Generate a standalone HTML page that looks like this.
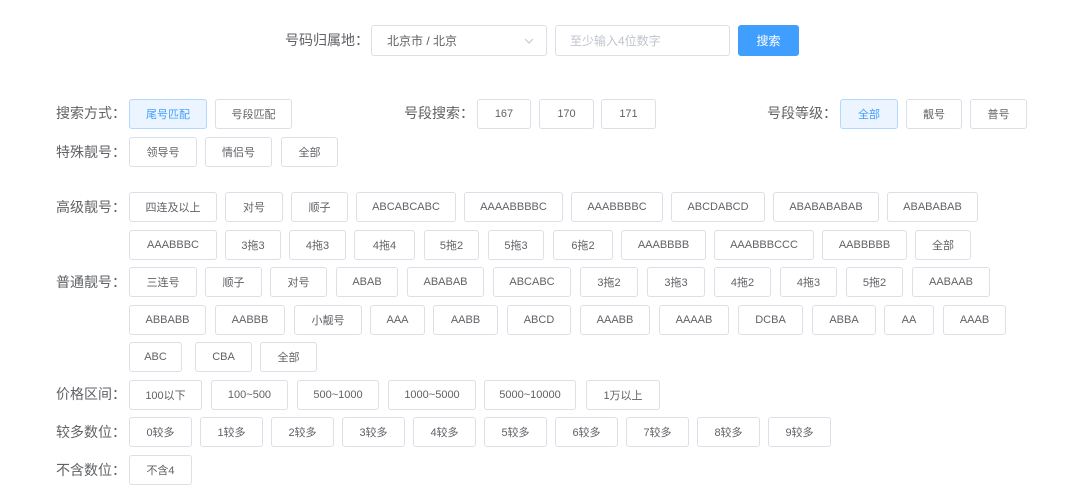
<!DOCTYPE html>
<html><head><meta charset="utf-8"><style>
body{margin:0;width:1080px;height:503px;background:#fff;position:relative;overflow:hidden;font-family:"Liberation Sans","Noto Sans CJK SC",sans-serif}
.b{position:absolute;height:28px;border:1px solid #dcdfe6;border-radius:3px;box-sizing:content-box;font-size:11px;color:#606266;display:flex;align-items:center;justify-content:center;background:#fff}
.s{background:#ecf5ff;border-color:#b3d8ff;color:#409eff}
.l{position:absolute;font-size:14px;color:#606266;line-height:16px}
</style></head><body>
<div class="l" style="left:285px;top:32px;">号码归属地：</div>
<div class="b" style="left:371px;top:25px;width:174px;height:29px;justify-content:flex-start;padding-left:0;font-size:12px"><span style="margin-left:15px">北京市 / 北京</span><svg style="position:absolute;right:12px;top:12px" width="10" height="6"><path d="M1 1 L5 5 L9 1" stroke="#c0c4cc" fill="none"/></svg></div>
<div class="b" style="left:555px;top:25px;width:173px;height:29px;justify-content:flex-start;font-size:12px;color:#c0c4cc"><span style="margin-left:14px">至少输入4位数字</span></div>
<div class="b" style="left:738px;top:25px;width:59px;height:29px;background:#409eff;border-color:#409eff;color:#fff;font-size:12px">搜索</div>

<div class="l" style="left:56px;top:105px">搜索方式：</div>
<div class="b s" style="left:129px;top:99px;width:76px">尾号匹配</div>
<div class="b" style="left:215px;top:99px;width:75px">号段匹配</div>
<div class="l" style="left:404px;top:105px">号段搜索：</div>
<div class="b" style="left:477px;top:99px;width:52px">167</div>
<div class="b" style="left:539px;top:99px;width:53px">170</div>
<div class="b" style="left:601px;top:99px;width:53px">171</div>
<div class="l" style="left:767px;top:105px">号段等级：</div>
<div class="b s" style="left:840px;top:99px;width:56px">全部</div>
<div class="b" style="left:906px;top:99px;width:54px">靓号</div>
<div class="b" style="left:970px;top:99px;width:55px">普号</div>

<div class="l" style="left:56px;top:144px">特殊靓号：</div>
<div class="b" style="left:129px;top:137px;width:66px">领导号</div>
<div class="b" style="left:205px;top:137px;width:65px">情侣号</div>
<div class="b" style="left:281px;top:137px;width:55px">全部</div>

<div class="l" style="left:56px;top:199px">高级靓号：</div>
<div class="b" style="left:129px;top:192px;width:86px">四连及以上</div>
<div class="b" style="left:225px;top:192px;width:56px">对号</div>
<div class="b" style="left:291px;top:192px;width:55px">顺子</div>
<div class="b" style="left:356px;top:192px;width:98px">ABCABCABC</div>
<div class="b" style="left:464px;top:192px;width:97px">AAAABBBBC</div>
<div class="b" style="left:571px;top:192px;width:90px">AAABBBBC</div>
<div class="b" style="left:671px;top:192px;width:92px">ABCDABCD</div>
<div class="b" style="left:773px;top:192px;width:104px">ABABABABAB</div>
<div class="b" style="left:887px;top:192px;width:89px">ABABABAB</div>

<div class="b" style="left:129px;top:230px;width:86px">AAABBBC</div>
<div class="b" style="left:225px;top:230px;width:54px">3拖3</div>
<div class="b" style="left:289px;top:230px;width:55px">4拖3</div>
<div class="b" style="left:354px;top:230px;width:59px">4拖4</div>
<div class="b" style="left:424px;top:230px;width:53px">5拖2</div>
<div class="b" style="left:488px;top:230px;width:54px">5拖3</div>
<div class="b" style="left:553px;top:230px;width:58px">6拖2</div>
<div class="b" style="left:621px;top:230px;width:83px">AAABBBB</div>
<div class="b" style="left:714px;top:230px;width:98px">AAABBBCCC</div>
<div class="b" style="left:822px;top:230px;width:83px">AABBBBB</div>
<div class="b" style="left:915px;top:230px;width:54px">全部</div>

<div class="l" style="left:56px;top:274px">普通靓号：</div>
<div class="b" style="left:129px;top:267px;width:66px">三连号</div>
<div class="b" style="left:205px;top:267px;width:55px">顺子</div>
<div class="b" style="left:270px;top:267px;width:55px">对号</div>
<div class="b" style="left:336px;top:267px;width:60px">ABAB</div>
<div class="b" style="left:407px;top:267px;width:75px">ABABAB</div>
<div class="b" style="left:493px;top:267px;width:76px">ABCABC</div>
<div class="b" style="left:580px;top:267px;width:56px">3拖2</div>
<div class="b" style="left:647px;top:267px;width:56px">3拖3</div>
<div class="b" style="left:714px;top:267px;width:55px">4拖2</div>
<div class="b" style="left:780px;top:267px;width:55px">4拖3</div>
<div class="b" style="left:846px;top:267px;width:55px">5拖2</div>
<div class="b" style="left:912px;top:267px;width:76px">AABAAB</div>

<div class="b" style="left:129px;top:305px;width:75px">ABBABB</div>
<div class="b" style="left:215px;top:305px;width:68px">AABBB</div>
<div class="b" style="left:294px;top:305px;width:66px">小靓号</div>
<div class="b" style="left:370px;top:305px;width:53px">AAA</div>
<div class="b" style="left:433px;top:305px;width:63px">AABB</div>
<div class="b" style="left:507px;top:305px;width:62px">ABCD</div>
<div class="b" style="left:580px;top:305px;width:68px">AAABB</div>
<div class="b" style="left:659px;top:305px;width:68px">AAAAB</div>
<div class="b" style="left:738px;top:305px;width:63px">DCBA</div>
<div class="b" style="left:812px;top:305px;width:62px">ABBA</div>
<div class="b" style="left:884px;top:305px;width:48px">AA</div>
<div class="b" style="left:943px;top:305px;width:61px">AAAB</div>

<div class="b" style="left:129px;top:342px;width:51px">ABC</div>
<div class="b" style="left:195px;top:342px;width:55px">CBA</div>
<div class="b" style="left:260px;top:342px;width:55px">全部</div>

<div class="l" style="left:56px;top:386px">价格区间：</div>
<div class="b" style="left:129px;top:380px;width:71px">100以下</div>
<div class="b" style="left:211px;top:380px;width:75px">100~500</div>
<div class="b" style="left:297px;top:380px;width:80px">500~1000</div>
<div class="b" style="left:388px;top:380px;width:86px">1000~5000</div>
<div class="b" style="left:484px;top:380px;width:90px">5000~10000</div>
<div class="b" style="left:586px;top:380px;width:72px">1万以上</div>

<div class="l" style="left:56px;top:424px">较多数位：</div>
<div class="b" style="left:129px;top:417px;width:61px">0较多</div>
<div class="b" style="left:200px;top:417px;width:61px">1较多</div>
<div class="b" style="left:271px;top:417px;width:61px">2较多</div>
<div class="b" style="left:342px;top:417px;width:61px">3较多</div>
<div class="b" style="left:413px;top:417px;width:61px">4较多</div>
<div class="b" style="left:484px;top:417px;width:61px">5较多</div>
<div class="b" style="left:555px;top:417px;width:61px">6较多</div>
<div class="b" style="left:626px;top:417px;width:61px">7较多</div>
<div class="b" style="left:697px;top:417px;width:61px">8较多</div>
<div class="b" style="left:768px;top:417px;width:61px">9较多</div>

<div class="l" style="left:56px;top:462px">不含数位：</div>
<div class="b" style="left:129px;top:455px;width:61px">不含4</div>
</body></html>
